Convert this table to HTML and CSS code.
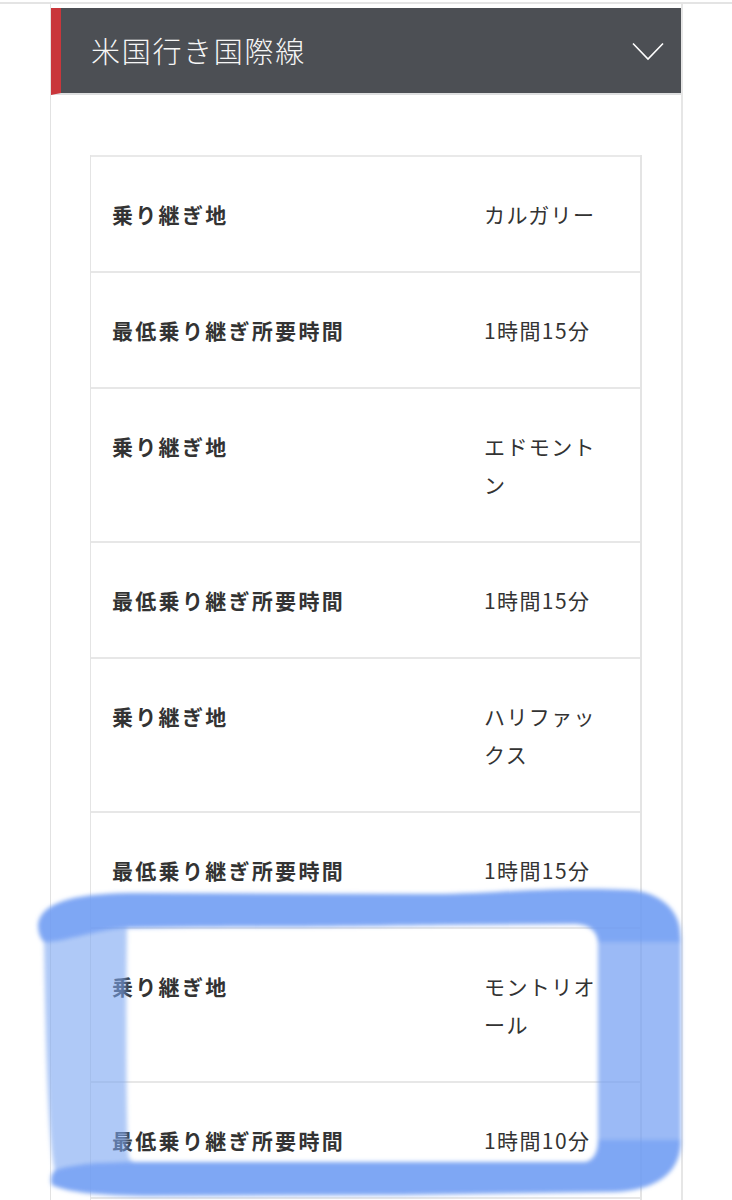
FILE: index.html
```html
<!DOCTYPE html>
<html lang="ja">
<head>
<meta charset="utf-8">
<title>米国行き国際線</title>
<link rel="stylesheet" href="styles.css">
</head>
<body>
<div class="topline"></div>
<section class="panel">
  <header class="panel-head">
    <h2 class="panel-title">米国行き国際線</h2>
    <svg class="chevron" width="32" height="19" viewBox="0 0 32 19" aria-hidden="true">
      <polyline points="1,1.5 16,17 31,1.5" fill="none" stroke="#ffffff" stroke-width="1.6"/>
    </svg>
  </header>
  <div class="panel-body">
    <div class="info">
      <div class="row"><div class="label">乗り継ぎ地</div><div class="value">カルガリー</div></div>
      <div class="row"><div class="label">最低乗り継ぎ所要時間</div><div class="value">1時間15分</div></div>
      <div class="row"><div class="label">乗り継ぎ地</div><div class="value">エドモントン</div></div>
      <div class="row"><div class="label">最低乗り継ぎ所要時間</div><div class="value">1時間15分</div></div>
      <div class="row"><div class="label">乗り継ぎ地</div><div class="value">ハリファックス</div></div>
      <div class="row"><div class="label">最低乗り継ぎ所要時間</div><div class="value">1時間15分</div></div>
      <div class="row"><div class="label">乗り継ぎ地</div><div class="value">モントリオール</div></div>
      <div class="row"><div class="label">最低乗り継ぎ所要時間</div><div class="value">1時間10分</div></div>
      <div class="row row-empty"></div>
    </div>
  </div>
</section>
<svg class="marker" width="732" height="1200" viewBox="0 0 732 1200" aria-hidden="true">
  <defs>
    <filter id="soft" x="-5%" y="-5%" width="110%" height="110%">
      <feGaussianBlur stdDeviation="2.2"/>
    </filter>
  </defs>
  <g filter="url(#soft)">
    <path class="mk-side-l" d="M44 942 C62 943 95 930 127 928 C126 1000 126 1100 128 1150 C128 1158 131 1162 135 1162 C110 1162 80 1162 55 1170 C47 1140 45 1000 44 942 Z"/>
    <path class="mk-side-r" d="M598 942 L681 942 L681 1140 L598 1140 Z"/>
    <path class="mk-band" d="M38 924 C42 900 80 893 140 893 L420 894 C480 895 525 888 600 889 L630 890 C660 892 678 910 680 930 L681 942 L598 942 C597 932 591 925 576 924 L440 925 C380 926 300 927 200 927 L127 928 C95 930 62 943 44 942 C40 938 38 932 38 924 Z"/>
    <path class="mk-band" d="M55 1170 C80 1162 110 1162 135 1162 L585 1162 C595 1160 598 1150 598 1140 L681 1140 C681 1172 658 1190 615 1192 L400 1195 L150 1196 C100 1196 66 1192 52 1185 C50 1180 51 1174 55 1170 Z"/>
  </g>
</svg>
</body>
</html>
```

FILE: styles.css
```css
html, body {
  margin: 0;
  padding: 0;
  background: #ffffff;
}

body {
  position: relative;
  padding-top: 2px;
  font-family: "Noto Sans CJK JP", "Noto Sans", sans-serif;
  color: #333333;
  overflow: hidden;
  height: 1198px;
}

.topline {
  height: 2px;
  background: #e4e4e4;
}

.panel {
  margin-left: 50px;
  width: 633px;
  box-sizing: border-box;
  border-left: 1px solid #e2e2e2;
  border-right: 2px solid #e6e6e6;
  padding-top: 4px;
  min-height: 1300px;
}

.panel-head {
  height: 85px;
  background: #4c4f54;
  border-left: 10px solid #c9363b;
  border-bottom: 2px solid #dedfe0;
  display: flex;
  align-items: center;
  justify-content: space-between;
  padding: 0 17px 0 30px;
}

.panel-title {
  margin: 0;
  font-size: 29px;
  font-weight: 300;
  letter-spacing: 1.7px;
  color: #f6f6f6;
  line-height: 1;
}

.chevron {
  display: block;
  margin-top: 1px;
}

.panel-body {
  padding: 60px 39px 0 39px;
}

.info {
  width: 552px;
  box-sizing: border-box;
  border-left: 1px solid #e4e4e4;
  border-right: 2px solid #e4e4e4;
}

.row {
  display: grid;
  grid-template-columns: 371px 1fr;
  border-top: 2px solid #e7e7e7;
  align-items: start;
}

.row:first-child {
  border-top: 2px solid #e9e9e9;
}

.row-empty {
  height: 80px;
}

.label,
.value {
  padding: 38px 0 38px 0;
  font-size: 21px;
  line-height: 38px;
}

.label {
  padding-left: 21px;
  font-weight: 700;
  letter-spacing: 2.3px;
  color: #333333;
}

.value {
  padding-left: 22px;
  width: 120px;
  font-weight: 400;
  letter-spacing: 1.4px;
  color: #333333;
}

.marker {
  position: absolute;
  top: 0;
  left: 0;
  pointer-events: none;
}

.mk-band {
  fill: rgba(108, 155, 242, 0.88);
}

.mk-side-l {
  fill: rgba(122, 165, 242, 0.6);
}

.mk-side-r {
  fill: rgba(115, 160, 242, 0.72);
}
```
